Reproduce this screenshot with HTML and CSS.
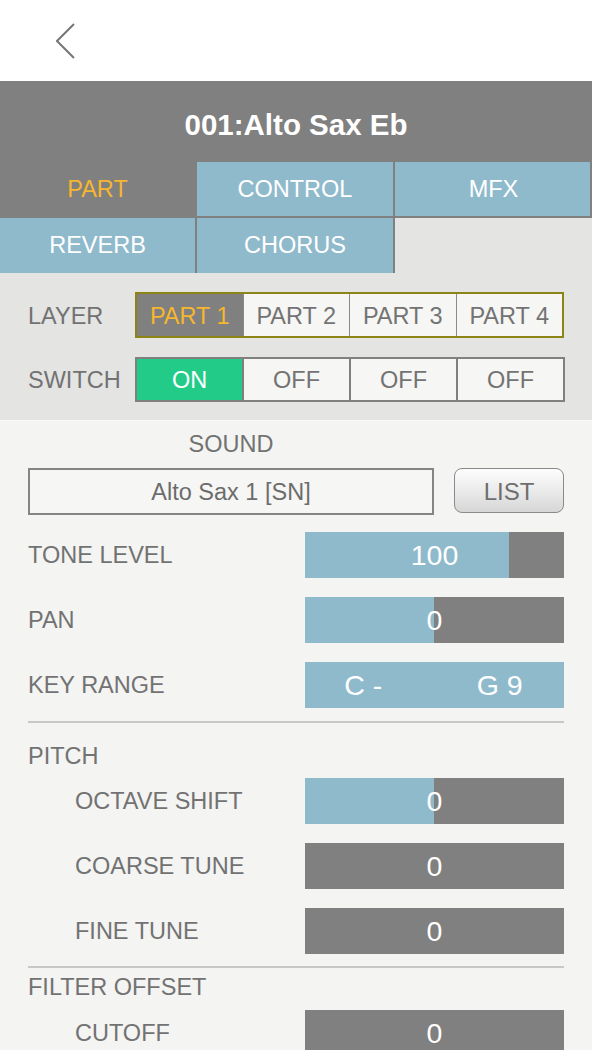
FILE: index.html
```html
<!DOCTYPE html>
<html>
<head>
<meta charset="utf-8">
<link rel="stylesheet" href="styles.css">
</head>
<body>
<div class="topbar">
  <svg class="back" width="20" height="37" viewBox="0 0 20 37"><polyline points="18,1 1,18 18,35" fill="none" stroke="#767676" stroke-width="2"/></svg>
</div>
<div class="titlebar">001:Alto Sax Eb</div>
<div class="tabs">
  <div class="tab active">PART</div>
  <div class="tab">CONTROL</div>
  <div class="tab mfx">MFX</div>
  <div class="tab">REVERB</div>
  <div class="tab">CHORUS</div>
  <div class="tab empty"></div>
</div>
<section class="layers">
  <div class="lrow">
    <span class="llabel">LAYER</span>
    <div class="seg layer">
      <span class="cell sel">PART 1</span>
      <span class="cell">PART 2</span>
      <span class="cell">PART 3</span>
      <span class="cell">PART 4</span>
    </div>
  </div>
  <div class="lrow">
    <span class="llabel">SWITCH</span>
    <div class="seg switch">
      <span class="cell on">ON</span>
      <span class="cell">OFF</span>
      <span class="cell">OFF</span>
      <span class="cell">OFF</span>
    </div>
  </div>
</section>
<main class="content">
  <div class="sound-head">SOUND</div>
  <div class="sound-row">
    <div class="sound-box">Alto Sax 1 [SN]</div>
    <div class="list">LIST</div>
  </div>
  <div class="prow first">
    <span class="plabel">TONE LEVEL</span>
    <div class="slider" style="--v:78.8%">100</div>
  </div>
  <div class="prow">
    <span class="plabel">PAN</span>
    <div class="slider" style="--v:50%">0</div>
  </div>
  <div class="prow">
    <span class="plabel">KEY RANGE</span>
    <div class="slider range"><span class="half lo">C -</span><span class="half hi">G 9</span></div>
  </div>
  <div class="divider d1"></div>
  <div class="ghead pitch">PITCH</div>
  <div class="prow sub nomargin">
    <span class="plabel">OCTAVE SHIFT</span>
    <div class="slider" style="--v:50%">0</div>
  </div>
  <div class="prow sub">
    <span class="plabel">COARSE TUNE</span>
    <div class="slider" style="--v:0%">0</div>
  </div>
  <div class="prow sub">
    <span class="plabel">FINE TUNE</span>
    <div class="slider" style="--v:0%">0</div>
  </div>
  <div class="divider d2"></div>
  <div class="ghead filter">FILTER OFFSET</div>
  <div class="prow sub nomargin">
    <span class="plabel">CUTOFF</span>
    <div class="slider" style="--v:0%">0</div>
  </div>
</main>
</body>
</html>
```
FILE: styles.css
```css
* { box-sizing: border-box; }
html, body { margin: 0; padding: 0; }
body {
  width: 592px;
  height: 1050px;
  overflow: hidden;
  font-family: "Liberation Sans", Arial, sans-serif;
  background: #f4f4f2;
  color: #717171;
}
.topbar {
  height: 81px;
  background: #ffffff;
  padding: 23px 0 0 56px;
}
.back { display: block; }
.titlebar {
  height: 81px;
  background: #808080;
  color: #ffffff;
  font-weight: bold;
  font-size: 29.5px;
  display: flex;
  align-items: center;
  justify-content: center;
  padding-top: 7px;
}
.tabs {
  display: grid;
  grid-template-columns: 195px 196px 197px;
  grid-template-rows: 54px 55px;
  gap: 2px;
  background: #808080;
}
.tab {
  background: #8fbacc;
  color: #ffffff;
  font-size: 23.5px;
  display: flex;
  align-items: center;
  justify-content: center;
}
.tab.active { background: #808080; color: #f6b62f; }
.tab.mfx { box-shadow: inset -2px 0 0 #808080; }
.tab.empty { background: #e4e4e3; }
.layers {
  background: #e4e4e3;
  padding: 19px 0 18px 28px;
  display: flex;
  flex-direction: column;
  gap: 19px;
}
.lrow {
  display: flex;
  align-items: center;
}
.llabel {
  width: 107px;
  font-size: 23.5px;
  color: #727272;
  padding-top: 2px;
}
.seg {
  display: flex;
  height: 46px;
  background: #f6f6f4;
}
.seg.layer { width: 429px; border: 2px solid #8c8414; }
.seg.switch { width: 430px; height: 45px; border: 2px solid #808080; }
.cell {
  flex: 1;
  display: flex;
  align-items: center;
  justify-content: center;
  font-size: 23.5px;
  color: #737373;
  padding-top: 2px;
}
.seg.layer .cell + .cell { border-left: 1px solid #8a8a8a; }
.seg.switch .cell + .cell { border-left: 2px solid #808080; }
.cell.sel { background: #808080; color: #f6b62f; }
.cell.on { background: #22cc88; color: #ffffff; }
.content {
  padding: 0 28px;
  border-top: 1px solid #f8f8f6;
}
.sound-head {
  width: 406px;
  height: 47px;
  display: flex;
  align-items: center;
  justify-content: center;
  font-size: 23.5px;
  color: #727272;
}
.sound-row {
  display: flex;
  align-items: flex-start;
  justify-content: space-between;
  height: 47px;
}
.sound-box {
  width: 406px;
  height: 47px;
  border: 2px solid #858585;
  background: #f6f6f4;
  display: flex;
  align-items: center;
  justify-content: center;
  font-size: 23.5px;
  color: #6c6c6c;
  padding-top: 1px;
}
.list {
  width: 110px;
  height: 45px;
  border: 1.5px solid #8a8a8a;
  border-radius: 8px;
  background: linear-gradient(#fdfdfd, #e9e9e9 55%, #d6d6d6);
  display: flex;
  align-items: center;
  justify-content: center;
  font-size: 24px;
  color: #6e6e6e;
  padding-top: 2px;
}
.prow {
  display: flex;
  align-items: center;
  justify-content: space-between;
  height: 46px;
  margin-top: 19px;
}
.prow.first { margin-top: 17px; }
.prow.nomargin { margin-top: 0; }
.plabel {
  font-size: 23.5px;
  color: #727272;
  padding-top: 1px;
}
.prow.sub .plabel { padding-left: 47px; }
.slider {
  width: 259px;
  height: 46px;
  background: linear-gradient(to right, #8fbacc var(--v), #808080 var(--v));
  color: #ffffff;
  font-size: 28.5px;
  display: flex;
  align-items: center;
  justify-content: center;
  padding-top: 1px;
}
.slider.range { background: #8fbacc; }
.half {
  flex: 1;
  text-align: center;
}
.half.lo { padding-right: 20px; }
.half.hi { padding-right: 6px; }
.divider {
  height: 2px;
  background: #c8c8c6;
}
.d1 { margin-top: 13px; }
.d2 { margin-top: 12px; }
.ghead {
  font-size: 23.5px;
  color: #727272;
  line-height: 28px;
}
.ghead.pitch { padding-top: 19px; padding-bottom: 8px; }
.ghead.filter { padding-top: 5px; padding-bottom: 9px; }
```
